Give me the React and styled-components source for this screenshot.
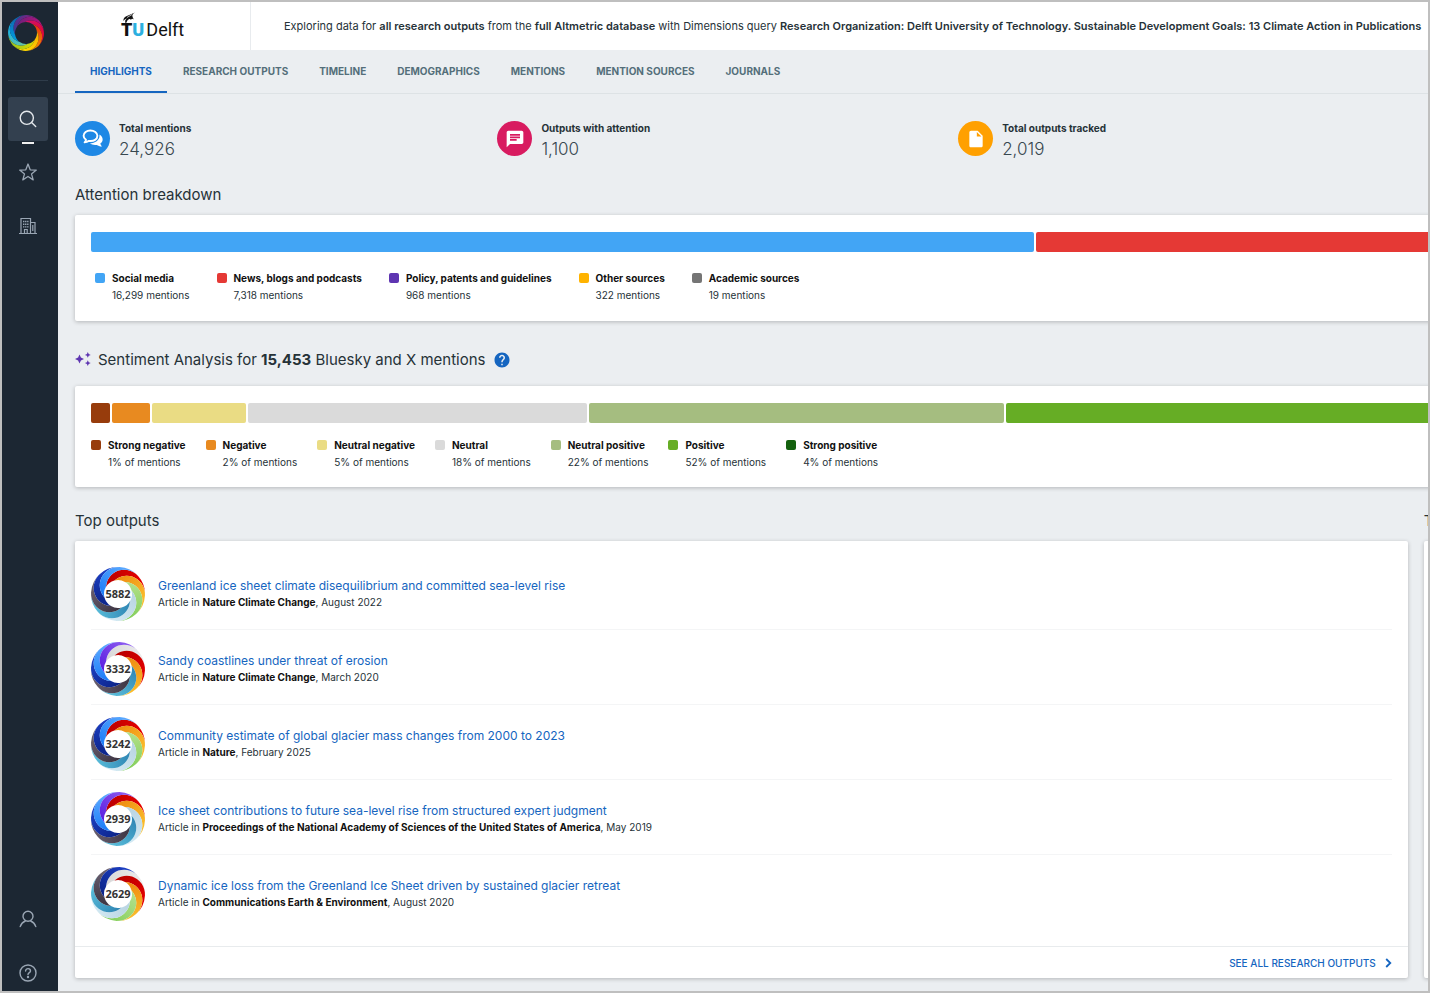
import React from "react";
import styled, { createGlobalStyle } from "styled-components";
import { MdChat, MdHelp, MdInsertDriveFile } from "react-icons/md";

const GlobalStyle = createGlobalStyle`
  * {
    box-sizing: border-box;
  }

  body {
    margin: 0;
    background: #ebeef1;
    color: #263238;
    font-family: Inter, "Liberation Sans", sans-serif;
    font-size: 10px;
  }

  h2, h3, p, ul, dl, dd {
    margin: 0;
    padding: 0;
  }

  ul {
    list-style: none;
  }

  a {
    color: inherit;
    text-decoration: none;
  }
`;

const tabs = [
  "Highlights",
  "Research outputs",
  "Timeline",
  "Demographics",
  "Mentions",
  "Mention sources",
  "Journals",
];

const attention = [
  { label: "Social media", value: "16,299 mentions", color: "#42a5f5", share: 943 },
  { label: "News, blogs and podcasts", value: "7,318 mentions", color: "#e53935", share: 860 },
  { label: "Policy, patents and guidelines", value: "968 mentions", color: "#5e35b1", share: 48 },
  { label: "Other sources", value: "322 mentions", color: "#ffb300", share: 20 },
  { label: "Academic sources", value: "19 mentions", color: "#757575", share: 9 },
];

const sentiment = [
  { label: "Strong negative", value: "1% of mentions", color: "#973c0c", share: 2 },
  { label: "Negative", value: "2% of mentions", color: "#e88a20", share: 4 },
  { label: "Neutral negative", value: "5% of mentions", color: "#eadc84", share: 10 },
  { label: "Neutral", value: "18% of mentions", color: "#dadada", share: 36 },
  { label: "Neutral positive", value: "22% of mentions", color: "#a5bd80", share: 44 },
  { label: "Positive", value: "52% of mentions", color: "#66ad25", share: 95 },
  { label: "Strong positive", value: "4% of mentions", color: "#14610f", share: 8 },
];

const blades = {
  red: ["#b80000", "#e60000"],
  orange: ["#ee8a10", "#fbc02d"],
  green: ["#b4e08c", "#84cf5c"],
  pale: ["#b8d4e2", "#d4eaf4"],
  teal: ["#2f86b4", "#5cc0dc"],
  grey: ["#3c3442", "#6a6070"],
  navy: ["#0c2488", "#1c3fc4"],
  blue: ["#1c7cf8", "#5caaff"],
  purple: ["#5c1ee0", "#8c5cf0"],
  silver: ["#d8d8d8", "#ececec"],
};

const outputs = [
  {
    score: 5882,
    title: "Greenland ice sheet climate disequilibrium and committed sea-level rise",
    journal: "Nature Climate Change",
    date: "August 2022",
    colors: ["red", "orange", "green", "pale", "teal", "grey", "navy", "blue"],
  },
  {
    score: 3332,
    title: "Sandy coastlines under threat of erosion",
    journal: "Nature Climate Change",
    date: "March 2020",
    colors: ["silver", "red", "orange", "teal", "grey", "navy", "blue", "purple"],
  },
  {
    score: 3242,
    title: "Community estimate of global glacier mass changes from 2000 to 2023",
    journal: "Nature",
    date: "February 2025",
    colors: ["red", "orange", "green", "pale", "teal", "grey", "navy", "blue"],
  },
  {
    score: 2939,
    title: "Ice sheet contributions to future sea-level rise from structured expert judgment",
    journal: "Proceedings of the National Academy of Sciences of the United States of America",
    date: "May 2019",
    colors: ["red", "orange", "pale", "teal", "grey", "navy", "blue", "purple"],
  },
  {
    score: 2629,
    title: "Dynamic ice loss from the Greenland Ice Sheet driven by sustained glacier retreat",
    journal: "Communications Earth & Environment",
    date: "August 2020",
    colors: ["silver", "red", "orange", "green", "pale", "teal", "grey", "navy"],
  },
];

const polar = (r, deg) => {
  const a = (deg * Math.PI) / 180;
  return `${(r * Math.cos(a)).toFixed(2)} ${(r * Math.sin(a)).toFixed(2)}`;
};

// Every blade runs from the inner ring to the outer one while it turns by `span` degrees
function Swirl({ id, size, inner, colors, start = -150, span = 108 }) {
  const outer = size / 2;
  const step = 360 / colors.length;
  const edge = Array.from({ length: 17 }, (_, i) => {
    const t = i / 16;
    return [inner + (outer - inner) * Math.sin((t * Math.PI) / 2) ** 1.25, span * t];
  });
  const up = edge.map(([r, a]) => polar(r, a)).join("L");
  const down = [...edge].reverse().map(([r, a]) => polar(r, a + step)).join("L");
  const blade = `M${up}A${outer} ${outer} 0 0 1 ${down}A${inner} ${inner} 0 0 0 ${polar(inner, 0)}Z`;
  const [x1, y1] = polar(inner, 0).split(" ");
  const [x2, y2] = polar(outer, span + step / 2).split(" ");

  return (
    <svg
      width={size}
      height={size}
      viewBox={`${-outer} ${-outer} ${size} ${size}`}
      aria-hidden="true"
    >
      <defs>
        {colors.map(([from, to], i) => (
          <linearGradient
            key={i}
            id={`${id}-${i}`}
            gradientUnits="userSpaceOnUse"
            x1={x1}
            y1={y1}
            x2={x2}
            y2={y2}
          >
            <stop offset="0" stopColor={from} />
            <stop offset="1" stopColor={to} />
          </linearGradient>
        ))}
      </defs>
      {colors.map((c, i) => (
        <path
          key={i}
          d={blade}
          fill={`url(#${id}-${i})`}
          transform={`rotate(${start + i * step})`}
        />
      ))}
    </svg>
  );
}

const logoColors = [
  ["#3a3a90", "#7b2382"],
  ["#70207c", "#b5127c"],
  ["#d0106a", "#e4032e"],
  ["#e8320e", "#f39200"],
  ["#f8b000", "#ffe000"],
  ["#d8dc00", "#95c11f"],
  ["#6cc4a0", "#10b0e8"],
  ["#00a0e0", "#1060ac"],
];

function TuDelft() {
  return (
    <Wordmark href="#" aria-label="TU Delft">
      <Flame width="15" height="13" viewBox="0 0 15 13" aria-hidden="true">
        <path
          d="M5 12C3.500 9.500 4 7.500 6 6.500C4.500 6.500 3.500 7.500 2.500 9C2 6.500 3.500 4.500 7 3.500L14 0.500C11.500 2 11 3 11.500 4.500C11.500 5.500 12.500 6 12.500 7.500C11.500 6.500 10.500 6.500 10 8C9.500 7 8.500 6.800 7.500 7.500C6 8.500 5.500 10 5 12Z"
          fill="#111"
        />
        <path d="M6 5.500 11 2.500" stroke="#fff" strokeWidth="0.700" />
      </Flame>
      <b>T</b>
      <b className="u">U</b>
      <span>Delft</span>
    </Wordmark>
  );
}

function SearchIcon() {
  return (
    <svg width="18" height="18" viewBox="0 0 18 18" fill="none" stroke="currentColor" strokeWidth="1.400" strokeLinecap="round">
      <circle cx="7.800" cy="7.800" r="6.600" />
      <path d="M12.600 12.600 16.700 16.500" />
    </svg>
  );
}

function StarIcon() {
  return (
    <svg width="18" height="18" viewBox="0 0 18 18" fill="none" stroke="currentColor" strokeWidth="1.300" strokeLinejoin="round">
      <path d="M9 1 11.200 6.800 17.300 7.100 12.500 10.900 14.200 16.900 9 13.500 3.800 16.900 5.500 10.900 0.700 7.100 6.800 6.800Z" />
    </svg>
  );
}

function BuildingIcon() {
  return (
    <svg width="18" height="18" viewBox="0 0 18 18" fill="none" stroke="currentColor" strokeWidth="1.200">
      <path d="M0 16.500H18M2 16.500V1.500H11.500V16.500M11.500 5.500H16V16.500M13.800 8V14M5.500 16.500V12.500H8.200V16.500" />
      <path d="M4 4.500H9.500M4 7.200H9.500M4 9.900H9.500" strokeDasharray="1.400 0.650" strokeWidth="1.400" />
    </svg>
  );
}

function UserIcon() {
  return (
    <svg width="18" height="18" viewBox="0 0 18 18" fill="none" stroke="currentColor" strokeWidth="1.400" strokeLinecap="round">
      <circle cx="9" cy="6.300" r="5" />
      <path d="M1.200 16.600C2.200 13.600 4 11.900 6.300 11M11.700 11C14 11.900 15.800 13.600 16.800 16.600" />
    </svg>
  );
}

function HelpIcon() {
  return (
    <svg width="18" height="18" viewBox="0 0 18 18" fill="none" stroke="currentColor" strokeWidth="1.400" strokeLinecap="round">
      <circle cx="9" cy="9" r="8" />
      <path d="M6.600 7C6.600 3.800 11.500 4 11.500 7C11.500 8.700 9 8.600 9 10.500" />
      <circle cx="9" cy="13" r="0.500" fill="currentColor" />
    </svg>
  );
}

function CommentsIcon() {
  return (
    <svg width="21" height="19" viewBox="0 0 21 19">
      <path
        d="M8.300 1.500C4.600 1.500 1.600 3.800 1.600 6.800C1.600 8.500 2.500 9.900 4 10.900C3.800 12 3.200 12.700 2.600 13.300C4.300 13.200 5.800 12.600 6.900 11.900C12 12.700 15.400 10.200 15.400 6.800C15.400 3.800 12.200 1.500 8.300 1.500Z"
        fill="none"
        stroke="#fff"
        strokeWidth="1.900"
        strokeLinejoin="round"
      />
      <path
        d="M17.400 5.500C21.500 8 21.600 12.300 18.300 14.500C18.500 15.700 19.200 16.600 20 17.400C18 17.500 16.200 16.800 14.800 15.900C12 16.300 9.500 15.700 8 14.300C13.600 14 18.200 10.800 17.400 5.500Z"
        fill="#fff"
      />
    </svg>
  );
}

function SparkleIcon() {
  return (
    <svg width="16" height="16" viewBox="0 0 16 16" fill="#5e35b1" aria-hidden="true">
      <path d="M4.500 2.500 5.900 5.600 9 7 5.900 8.400 4.500 11.500 3.100 8.400 0 7 3.100 5.600Z" />
      <path d="M12.800 0 13.700 2 15.700 2.900 13.700 3.800 12.800 5.800 11.900 3.800 9.900 2.900 11.900 2Z" />
      <path d="M12.800 8.200 13.700 10.200 15.700 11.100 13.700 12 12.800 14 11.900 12 9.900 11.100 11.900 10.200Z" />
    </svg>
  );
}

function Breakdown({ items, compact }) {
  return (
    <Card>
      <Bar>
        {items.map((item) => (
          <Segment key={item.label} $color={item.color} style={{ flexGrow: item.share }} />
        ))}
      </Bar>
      <Legend $compact={compact}>
        {items.map((item) => (
          <LegendItem key={item.label} $color={item.color}>
            <h3>{item.label}</h3>
            <p>{item.value}</p>
          </LegendItem>
        ))}
      </Legend>
    </Card>
  );
}

export default function App() {
  return (
    <Frame>
      <GlobalStyle />
      <Sidebar>
        <Brand href="#" aria-label="Home">
          <Swirl id="brand" size={36} inner={11} start={-190} colors={logoColors} />
        </Brand>
        <NavButton $active aria-label="Search">
          <SearchIcon />
        </NavButton>
        <Dash />
        <NavButton aria-label="Favourites">
          <StarIcon />
        </NavButton>
        <NavButton aria-label="Organisations">
          <BuildingIcon />
        </NavButton>
        <Spacer />
        <NavButton aria-label="Account">
          <UserIcon />
        </NavButton>
        <NavButton aria-label="Help">
          <HelpIcon />
        </NavButton>
      </Sidebar>

      <Main>
        <Header>
          <TuDelft />
          <Query>
            Exploring data for <b>all research outputs</b> from the{" "}
            <b>full Altmetric database</b> with Dimensions query{" "}
            <b>
              Research Organization: Delft University of Technology. Sustainable
              Development Goals: 13 Climate Action in Publications
            </b>
          </Query>
        </Header>

        <Tabs>
          {tabs.map((tab, i) => (
            <Tab key={tab} href="#" $active={i === 0}>
              {tab}
            </Tab>
          ))}
        </Tabs>

        <Content>
          <Stats>
            <Stat $color="#1e88e5">
              <span className="icon">
                <CommentsIcon />
              </span>
              <dl>
                <dt>Total mentions</dt>
                <dd>24,926</dd>
              </dl>
            </Stat>
            <Stat $color="#d81b60">
              <span className="icon">
                <MdChat size={20} />
              </span>
              <dl>
                <dt>Outputs with attention</dt>
                <dd>1,100</dd>
              </dl>
            </Stat>
            <Stat $color="#ffa000">
              <span className="icon">
                <MdInsertDriveFile size={20} />
              </span>
              <dl>
                <dt>Total outputs tracked</dt>
                <dd>2,019</dd>
              </dl>
            </Stat>
          </Stats>

          <Heading>Attention breakdown</Heading>
          <Breakdown items={attention} />

          <Heading $spaced>
            <SparkleIcon />
            <span>
              Sentiment Analysis for <b>15,453</b> Bluesky and X mentions
            </span>
            <InfoButton aria-label="About sentiment analysis">
              <MdHelp size={18} />
            </InfoButton>
          </Heading>
          <Breakdown items={sentiment} compact />

          <Columns>
            <section>
              <Heading>Top outputs</Heading>
              <Panel>
                <ul>
                  {outputs.map((o) => (
                    <Output key={o.score}>
                      <Donut>
                        <Swirl
                          id={`donut-${o.score}`}
                          size={54}
                          inner={14}
                          colors={o.colors.map((c) => blades[c])}
                        />
                        <span>{o.score}</span>
                      </Donut>
                      <div>
                        <OutputTitle href="#">{o.title}</OutputTitle>
                        <Source>
                          Article in <b>{o.journal}</b>, {o.date}
                        </Source>
                      </div>
                    </Output>
                  ))}
                </ul>
                <PanelFooter>
                  <a href="#">
                    See all research outputs
                    <svg width="7" height="10" viewBox="0 0 7 10" fill="none" stroke="currentColor" strokeWidth="1.800">
                      <path d="M1.200 1 5.300 5 1.200 9" />
                    </svg>
                  </a>
                </PanelFooter>
              </Panel>
            </section>
            <section>
              <Heading>T</Heading>
              <Panel />
            </section>
          </Columns>
        </Content>
      </Main>
    </Frame>
  );
}

const Frame = styled.div`
  display: flex;
  min-height: 100vh;
  border: 2px solid #bfbfbf;
`;

const Sidebar = styled.nav`
  display: flex;
  flex-direction: column;
  flex: 0 0 56px;
  padding: 0 10px 0 6px;
  background: #1c2733;
`;

const Brand = styled.a`
  height: 79px;
  padding-top: 13px;
  margin-bottom: 16px;
  border-bottom: 1px solid #2f3c4a;
`;

const NavButton = styled.button`
  display: flex;
  align-items: center;
  justify-content: center;
  flex-shrink: 0;
  height: ${(p) => (p.$active ? 44 : 36)}px;
  margin-bottom: ${(p) => (p.$active ? 1 : 18)}px;
  padding: 0;
  border: 0;
  border-radius: 3px;
  background: ${(p) => (p.$active ? "#33404f" : "transparent")};
  color: ${(p) => (p.$active ? "#e4e8ec" : "#9aa6b4")};

  &:last-child {
    margin-bottom: 0;
  }
`;

const Dash = styled.div`
  width: 12px;
  height: 2px;
  margin: 0 auto 10px;
  background: #f0f0f0;
`;

const Spacer = styled.div`
  flex: 1;
`;

const Main = styled.main`
  flex: 1;
  min-width: 0;
  overflow: hidden;
`;

const Header = styled.header`
  display: flex;
  height: 48px;
  background: #fff;
`;

const Wordmark = styled.a`
  position: relative;
  display: flex;
  align-items: baseline;
  flex: 0 0 193px;
  padding: 17px 0 0 63px;
  border-right: 1px solid #e8ebee;
  color: #111;
  font-family: Roboto, sans-serif;
  font-size: 18px;
  line-height: 22px;

  b {
    font-weight: 900;
  }

  .u {
    color: #2cb0e0;
    margin-right: 2px;
  }
`;

const Flame = styled.svg`
  position: absolute;
  left: 63px;
  top: 10px;
`;

const Query = styled.p`
  padding: 0 33px;
  font-size: 11px;
  line-height: 48px;
  white-space: nowrap;

  b {
    font-weight: 600;
  }
`;

const Tabs = styled.nav`
  display: flex;
  gap: 1px;
  height: 44px;
  padding-left: 17px;
  border-bottom: 1px solid #dde2e5;
`;

const Tab = styled.a`
  padding: 0 15px;
  color: ${(p) => (p.$active ? "#1565c0" : "#546e7a")};
  border-bottom: 2px solid ${(p) => (p.$active ? "#1565c0" : "transparent")};
  font-size: 10px;
  font-weight: 700;
  line-height: 43px;
  text-transform: uppercase;
`;

/* wider than the window, the rest is cut off on the right */
const Content = styled.div`
  width: calc(100% + 584px);
  padding: 27px 17px 12px;
`;

const Stats = styled.div`
  display: grid;
  grid-template-columns: 22fr 24fr 54fr;
  margin-bottom: 27px;
`;

const Stat = styled.div`
  display: flex;
  gap: 9px;
  height: 36px;

  .icon {
    display: flex;
    align-items: center;
    justify-content: center;
    width: 35px;
    height: 35px;
    border-radius: 50%;
    background: ${(p) => p.$color};
    color: #fff;
  }

  dt {
    font-size: 10px;
    font-weight: 700;
    line-height: 15px;
  }

  dd {
    color: #37474f;
    font-size: 17px;
    font-weight: 300;
    line-height: 26px;
  }
`;

const Heading = styled.h2`
  display: flex;
  align-items: center;
  gap: 7px;
  height: 22px;
  margin: ${(p) => (p.$spaced ? "28px 0 15px" : "1px 0 9px")};
  font-size: 15px;
  font-weight: 400;
  line-height: 22px;

  b {
    font-weight: 700;
  }
`;

const InfoButton = styled.button`
  display: flex;
  padding: 0;
  border: 0;
  background: none;
  color: #1565c0;
`;

const Card = styled.div`
  padding: 17px 16px 16px;
  border-radius: 2px;
  background: #fff;
  box-shadow: 0 1px 4px rgba(0, 0, 0, 0.24);
`;

const Bar = styled.div`
  display: flex;
  gap: 2px;
  height: 20px;
`;

const Segment = styled.div`
  flex: 1 1 0;
  border-radius: 2px;
  background: ${(p) => p.$color};
`;

const Legend = styled.div`
  display: flex;
  gap: ${(p) => (p.$compact ? 20 : 27)}px;
  padding: ${(p) => (p.$compact ? "14px 0 0" : "18px 4px 1px")};
`;

const LegendItem = styled.div`
  display: grid;
  grid-template-columns: 10px auto;
  column-gap: 7px;
  line-height: 17px;
  white-space: nowrap;

  &::before {
    content: "";
    width: 10px;
    height: 10px;
    margin-top: 3px;
    border-radius: 2px;
    background: ${(p) => p.$color};
  }

  h3 {
    color: #111;
    font-size: 10px;
    font-weight: 700;
  }

  p {
    grid-column: 2;
  }
`;

const Columns = styled.div`
  display: grid;
  grid-template-columns: 7fr 3fr;
  gap: 16px;
  margin-top: 22px;

  section {
    display: flex;
    flex-direction: column;
  }
`;

const Panel = styled.div`
  flex: 1;
  padding-top: 14px;
  border-radius: 2px;
  background: #fff;
  box-shadow: 0 1px 4px rgba(0, 0, 0, 0.24);
`;

const Output = styled.li`
  display: flex;
  align-items: center;
  gap: 13px;
  height: 75px;
  margin: 0 16px;
  padding-top: 3px;
  border-bottom: 1px solid #f4f5f6;

  &:last-child {
    border-bottom-color: transparent;
  }
`;

const Donut = styled.div`
  display: grid;
  place-items: center;
  width: 54px;
  height: 54px;

  > * {
    grid-area: 1 / 1;
  }

  span {
    font-family: "Liberation Sans Narrow", "Open Sans", sans-serif;
    font-size: 11px;
    font-weight: 700;
    line-height: 12px;
    color: #333;
  }
`;

const OutputTitle = styled.a`
  display: block;
  color: #1565c0;
  font-size: 12px;
  line-height: 17px;
`;

const Source = styled.p`
  font-size: 10px;
  line-height: 17px;

  b {
    color: #111;
    font-weight: 700;
  }
`;

const PanelFooter = styled.div`
  display: flex;
  justify-content: flex-end;
  height: 32px;
  margin-top: 16px;
  padding-right: 16px;
  border-top: 1px solid #e8ebed;

  a {
    display: flex;
    align-items: center;
    gap: 9px;
    color: #1565c0;
    font-size: 10px;
    font-weight: 500;
    text-transform: uppercase;
  }
`;
